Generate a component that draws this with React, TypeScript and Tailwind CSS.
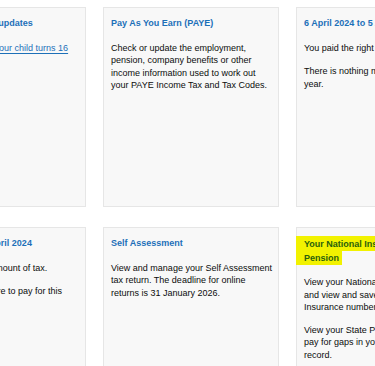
type Tile = {
  title: React.ReactNode
  body: React.ReactNode
}

const titleCls = 'mb-[11px] text-[9px] font-bold leading-[14.5px] text-[#1d70b8]'
const pCls = 'whitespace-nowrap text-[9px] leading-[12.5px] text-[#0b0c0c]'

const taxYear = (from: string, to: string): Tile => ({
  title: `6 April ${from} to 5 April ${to}`,
  body: (
    <>
      <p className={`${pCls} mb-[11px]`}>You paid the right amount of tax.</p>
      <p className={pCls}>
        There is nothing more to pay for this
        <br />
        year.
      </p>
    </>
  ),
})

const tiles: Tile[] = [
  {
    title: 'Your Child Benefit updates',
    body: (
      <p className={pCls}>
        <a href="#" className="text-[#1d70b8] underline underline-offset-[1.5px]">
          Tell us when and if your child turns 16
        </a>
      </p>
    ),
  },
  {
    title: 'Pay As You Earn (PAYE)',
    body: (
      <p className={pCls}>
        Check or update the employment,
        <br />
        pension, company benefits or other
        <br />
        income information used to work out
        <br />
        your PAYE Income Tax and Tax Codes.
      </p>
    ),
  },
  taxYear('2024', '2025'),
  taxYear('2023', '2024'),
  {
    title: 'Self Assessment',
    body: (
      <p className={pCls}>
        View and manage your Self Assessment
        <br />
        tax return. The deadline for online
        <br />
        returns is 31 January 2026.
      </p>
    ),
  },
  {
    // highlighted (marker) title
    title: (
      <span className="-ml-[8px] bg-[#f2f200] py-[2.5px] pr-[3px] pl-[8px] text-[#2a5f0c] [box-decoration-break:clone]">
        Your National Insurance and State
        <br />
        Pension
      </span>
    ),
    body: (
      <>
        <p className={`${pCls} mb-[10px]`}>
          View your National Insurance number
          <br />
          and view and save your National
          <br />
          Insurance number letter.
        </p>
        <p className={pCls}>
          View your State Pension forecast and
          <br />
          pay for gaps in your National Insurance
          <br />
          record.
        </p>
      </>
    ),
  },
]

export default function App() {
  return (
    <div className="h-[366px] w-[375px] overflow-hidden bg-white font-['Liberation_Sans',Arial,sans-serif]">
      <div className="-ml-[90px] grid w-[562px] grid-cols-[176px_176px_176px] gap-x-[17px] gap-y-[20px] pt-[7px]">
        {tiles.map((t, i) => (
          <div key={i} className="h-[200px] border border-[#e6e6e6] bg-[#f8f8f8] px-[7px] pt-[8px]">
            <h3 className={titleCls}>{t.title}</h3>
            {t.body}
          </div>
        ))}
      </div>
    </div>
  )
}
